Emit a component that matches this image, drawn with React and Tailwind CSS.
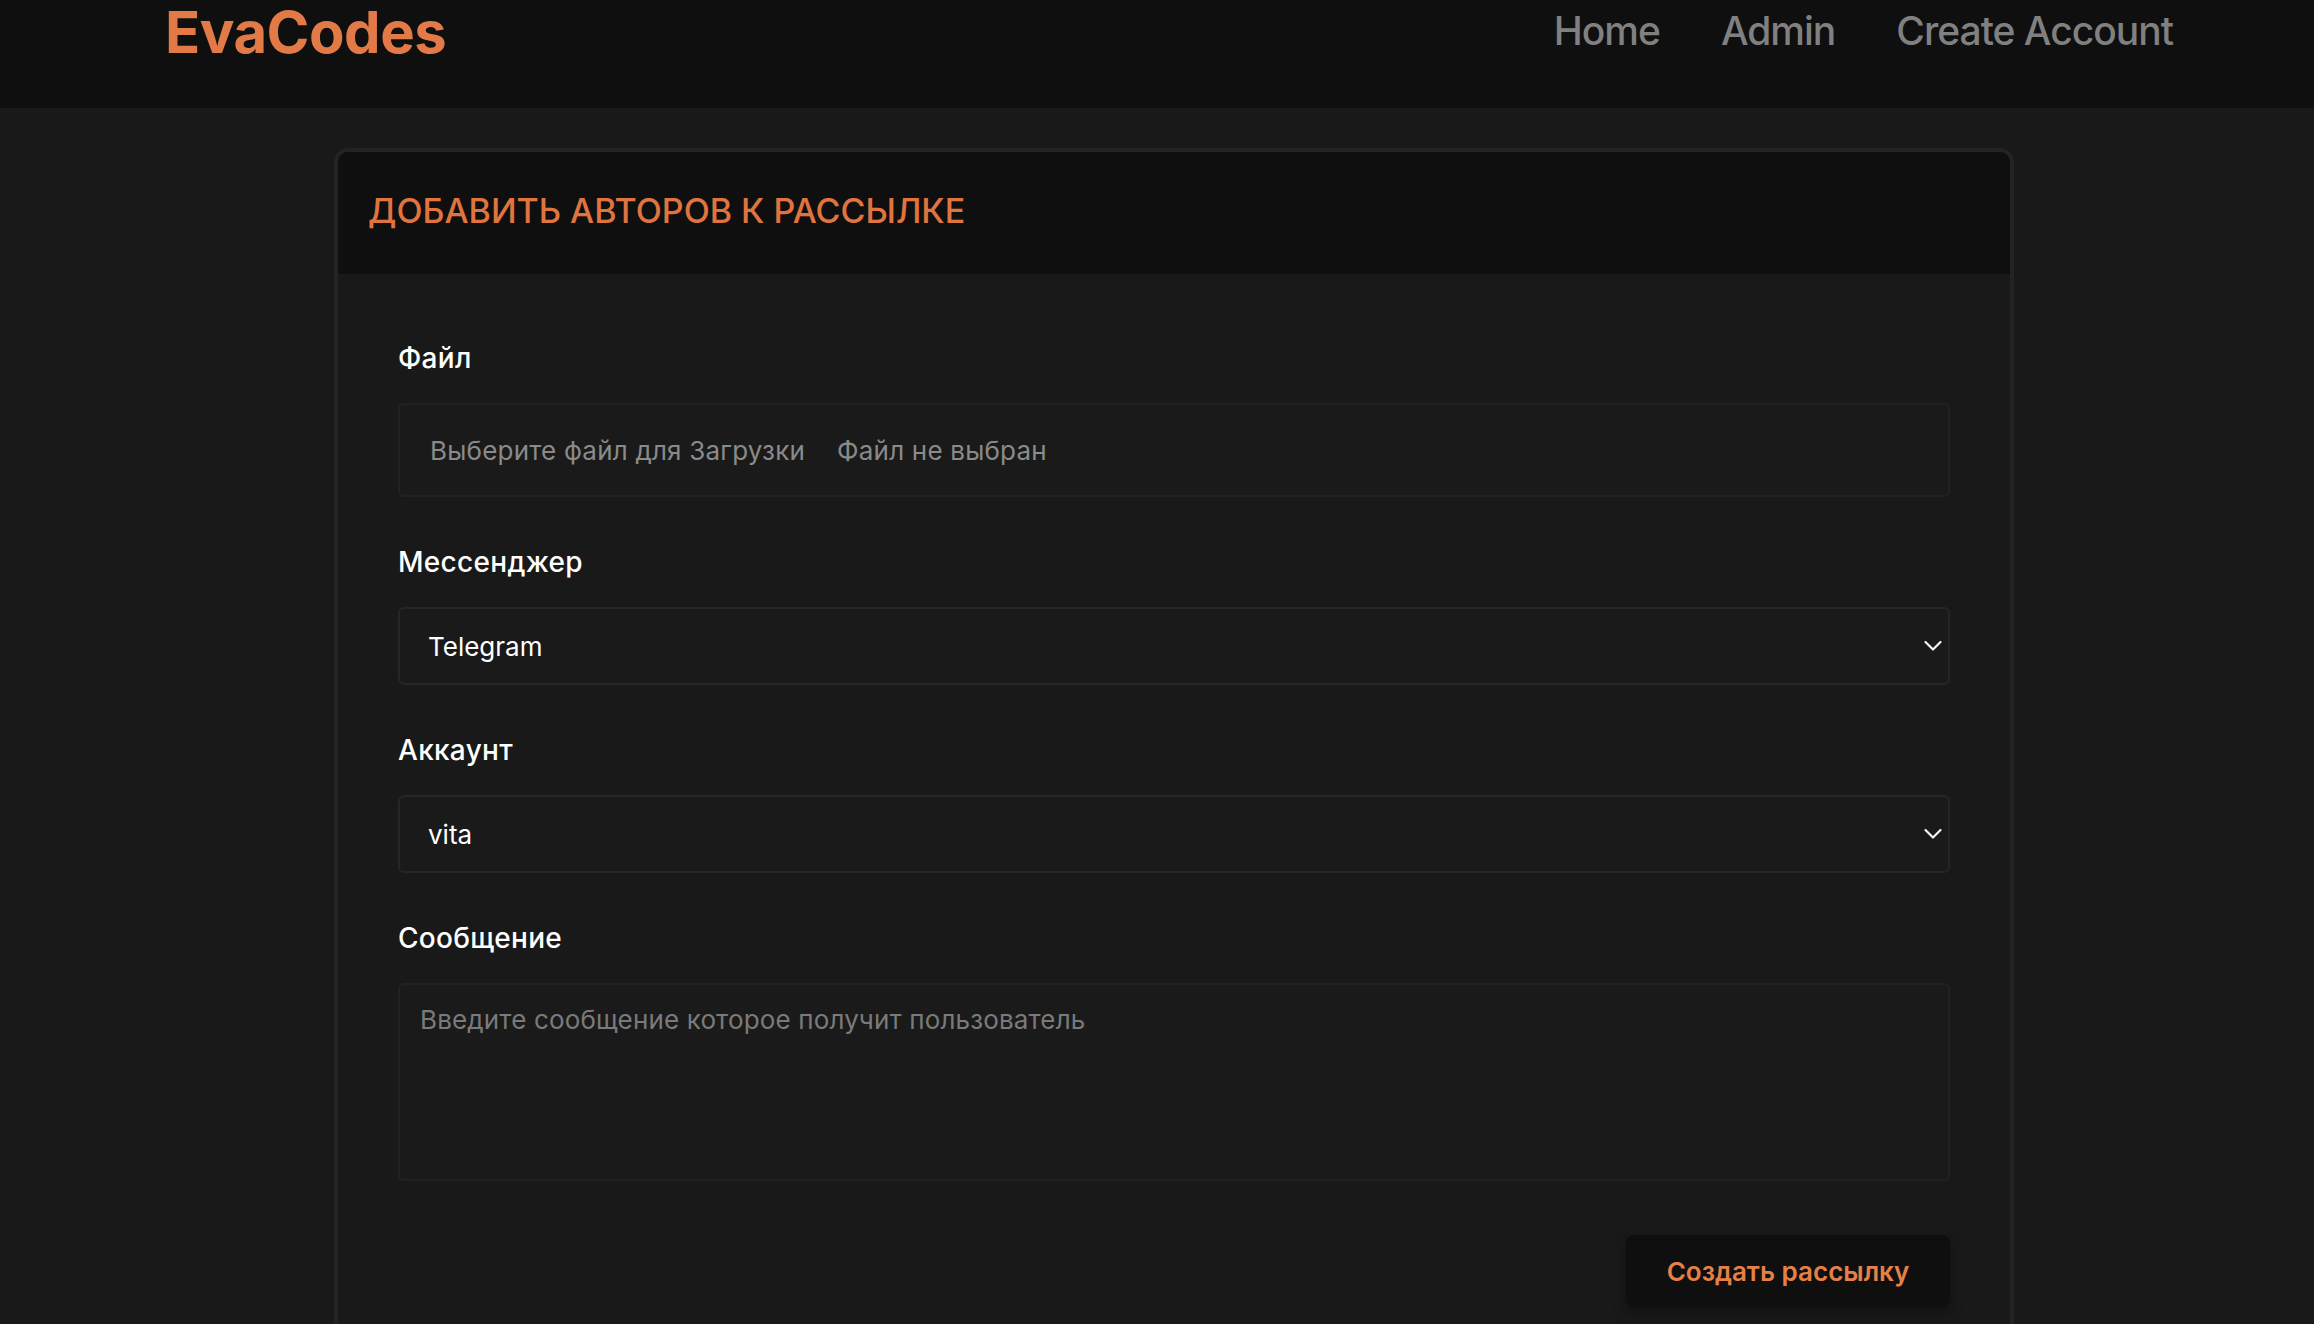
import { useState } from "react";

const Chevron = () => (
  <svg width="18" height="11" viewBox="0 0 18 11" fill="none" className="shrink-0">
    <path d="M1.5 1.5L9 9L16.5 1.5" stroke="#f2f2f2" strokeWidth="2.2" strokeLinecap="round" strokeLinejoin="round" />
  </svg>
);

const Field = ({ label, children }) => (
  <div className="mb-[44px]">
    <label className="block text-[28px] leading-[42px] font-medium text-white tracking-[0.3px] mb-6">{label}</label>
    {children}
  </div>
);

const Select = ({ value, options, onChange }) => (
  <div className="relative">
    <select
      value={value}
      onChange={(e) => onChange(e.target.value)}
      className="appearance-none w-full h-[78px] pl-[28px] pr-12 bg-[#1a1a1a] border-2 border-[#262626] rounded-md text-[26px] text-white outline-none"
    >
      {options.map((o) => (
        <option key={o}>{o}</option>
      ))}
    </select>
    <span className="pointer-events-none absolute right-[8px] top-1/2 -translate-y-1/2">
      <Chevron />
    </span>
  </div>
);

export default function App() {
  const [messenger, setMessenger] = useState("Telegram");
  const [account, setAccount] = useState("vita");

  return (
    <div className="min-h-screen bg-[#191919] font-['Inter',sans-serif] overflow-hidden">
      {/* Header */}
      <header className="h-[108px] bg-[#0f0f0f] flex items-start justify-between pl-[165px] pr-[141px]">
        <a className="mt-[3px] text-[58px] leading-[58px] font-bold text-[#e27a47] tracking-[-0.5px]">EvaCodes</a>
        <nav className="mt-[7px] flex gap-[61px] text-[39px] leading-[47px] font-medium text-[#808080] tracking-[-1px]">
          <a>Home</a>
          <a>Admin</a>
          <a>Create Account</a>
        </nav>
      </header>

      {/* Card */}
      <div className="mt-[40px] ml-[334px] w-[1680px] border-4 border-[#232323] rounded-[14px] overflow-hidden">
        <div className="h-[122px] bg-[#0f0f0f] flex items-center px-[30px] pb-[6px]">
          <h2 className="text-[34px] font-medium text-[#e0743f]">ДОБАВИТЬ АВТОРОВ К РАССЫЛКЕ</h2>
        </div>

        <form className="px-[60px] pt-[63px] pb-16 bg-[#191919]">
          <Field label="Файл">
            <div className="h-[94px] flex items-center gap-[32px] px-[30px] bg-[#1a1a1a] border-2 border-[#222222] rounded-md text-[26px] tracking-[0.2px] text-[#8a8a8a]">
              <span>Выберите файл для Загрузки</span>
              <span>Файл не выбран</span>
            </div>
          </Field>

          <Field label="Мессенджер">
            <Select value={messenger} options={["Telegram", "WhatsApp"]} onChange={setMessenger} />
          </Field>

          <Field label="Аккаунт">
            <Select value={account} options={["vita"]} onChange={setAccount} />
          </Field>

          <div>
            <label className="block text-[28px] leading-[42px] font-medium text-white tracking-[0.3px] mb-6">Сообщение</label>
            <textarea
              placeholder="Введите сообщение которое получит пользователь"
              className="block w-full h-[198px] resize-none px-[20px] py-[17px] bg-[#1a1a1a] border-2 border-[#222222] rounded-md text-[26px] leading-[36px] tracking-[0.15px] text-white placeholder:text-[#7a7a7a] outline-none"
            />
          </div>

          <div className="mt-[54px] flex justify-end">
            <button
              type="button"
              className="w-[324px] h-[72px] bg-[#0f0f0f] rounded-lg text-[26px] font-semibold text-[#e58146] shadow-[0_6px_14px_rgba(0,0,0,0.35)]"
            >
              Создать рассылку
            </button>
          </div>
        </form>
      </div>
    </div>
  );
}
